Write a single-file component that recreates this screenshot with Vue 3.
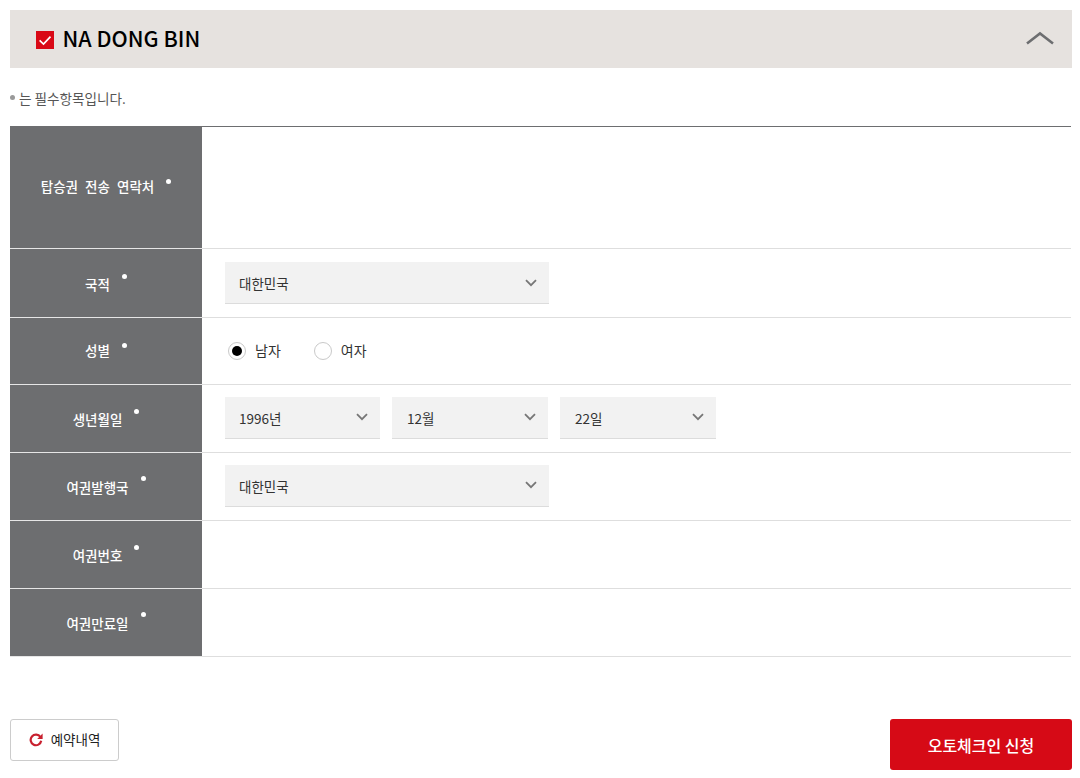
<script setup>
const rows = [
  { key: 'contact', label: '탑승권 전송 연락처', type: 'empty' },
  { key: 'nation', label: '국적', type: 'select', values: [{ text: '대한민국', wide: true }] },
  { key: 'gender', label: '성별', type: 'radio' },
  { key: 'birth', label: '생년월일', type: 'select', values: [{ text: '1996년' }, { text: '12월' }, { text: '22일' }] },
  { key: 'issue', label: '여권발행국', type: 'select', values: [{ text: '대한민국', wide: true }] },
  { key: 'passport', label: '여권번호', type: 'empty' },
  { key: 'expiry', label: '여권만료일', type: 'empty' }
]
</script>

<template>
  <div class="page">
    <header class="head">
      <div class="name">
        <span class="check">
          <svg width="18" height="18" viewBox="0 0 18 18"><path d="M3.6 9.4l3.9 3.7 7-7.5" fill="none" stroke="#fff" stroke-width="1.7"/></svg>
        </span>
        <span class="name-text">NA DONG BIN</span>
      </div>
      <svg class="collapse" width="30" height="16" viewBox="0 0 30 16"><path d="M2 12.5L15 2.5l13 10" fill="none" stroke="#6d6e70" stroke-width="2.6"/></svg>
    </header>

    <p class="note"><i class="note-dot"></i>는 필수항목입니다.</p>

    <div class="table">
      <div v-for="row in rows" :key="row.key" class="row" :class="row.key">
        <div class="label">
          <span class="label-text">{{ row.label }}<i class="req"></i></span>
        </div>
        <div class="field">
          <template v-if="row.type === 'select'">
            <div v-for="v in row.values" :key="v.text" class="select" :class="{ wide: v.wide }">
              <span class="select-text">{{ v.text }}</span>
              <svg width="12" height="8" viewBox="0 0 12 8"><path d="M1 1.2l5 5 5-5" fill="none" stroke="#777" stroke-width="1.8"/></svg>
            </div>
          </template>
          <div v-else-if="row.type === 'radio'" class="radios">
            <label class="radio"><span class="circle on"></span><span class="radio-text">남자</span></label>
            <label class="radio"><span class="circle"></span><span class="radio-text">여자</span></label>
          </div>
        </div>
      </div>
    </div>

    <footer class="actions">
      <button class="history">
        <svg width="14" height="14" viewBox="0 0 14 14"><path d="M11.4 4A5.3 5.3 0 1 0 12.2 7.8" fill="none" stroke="#c8202f" stroke-width="2.2"/><path d="M13.6 0.6v5.4h-5.4z" fill="#c8202f"/></svg>
        <span class="history-text">예약내역</span>
      </button>
      <button class="submit">오토체크인 신청</button>
    </footer>
  </div>
</template>

<style scoped>
.page {
  width: 1062px;
  padding: 10px 0 8px 10px;
  font-family: "Noto Sans CJK KR", "Noto Sans", sans-serif;
  color: #333;
}
.head {
  height: 58px;
  background: #e6e2df;
  display: flex;
  align-items: center;
  justify-content: space-between;
  padding: 0 17px 0 26px;
  box-sizing: border-box;
}
.name { display: flex; align-items: center; gap: 8.5px; }
.check {
  width: 18px;
  height: 18px;
  background: #d90916;
  display: block;
  margin-top: 2px;
}
.check svg { display: block; }
.name-text {
  font-size: 21.5px;
  font-weight: 500;
  line-height: 30px;
  color: #000;
  margin-bottom: 3px;
}
.collapse { display: block; }
.note {
  margin: 0;
  font-size: 13.6px;
  line-height: 20px;
  color: #555;
  display: flex;
  align-items: center;
  height: 58px;
  padding: 1px 0 0;
  box-sizing: border-box;
}
.note-dot {
  width: 5px;
  height: 5px;
  border-radius: 50%;
  background: #999;
  margin-right: 4px;
}
.table {
  width: 1061px;
  border-top: 1px solid #6d6e70;
}
.row {
  display: grid;
  grid-template-columns: 192px 1fr;
  height: 68px;
}
.row.contact { height: 122px; }
.row.nation { height: 69px; }
.row.gender { height: 67px; }
.label {
  background: #6d6e70;
  border-bottom: 1px solid #e6e6e6;
  display: flex;
  align-items: center;
  justify-content: center;
  box-sizing: border-box;
}
.label-text {
  position: relative;
  font-size: 13.5px;
  font-weight: 500;
  color: #fff;
  line-height: 20px;
  top: 0;
  padding-right: 17px;
  word-spacing: 4px;
}
.contact .label-text { top: -2px; }
.nation .label-text { top: 1px; }
.gender .label-text { top: -1px; }
.req {
  position: absolute;
  right: 0;
  top: 0;
  width: 5px;
  height: 5px;
  border-radius: 50%;
  background: #fff;
}
.contact .req, .gender .req { top: 3px; }
.issue .req, .expiry .req { top: -1px; }
.field {
  border-bottom: 1px solid #dedede;
  padding-left: 23px;
  display: flex;
  align-items: center;
  gap: 12px;
  box-sizing: border-box;
}
.birth .field, .issue .field { padding-bottom: 2px; }
.select {
  width: 156px;
  height: 42px;
  background: #f2f2f2;
  border-bottom: 1px solid #dcdcdc;
  box-sizing: border-box;
  display: flex;
  align-items: center;
  justify-content: space-between;
  padding: 0 12px 0 15px;
  font-size: 13.5px;
  color: #333;
}
.select:first-child { width: 155px; padding-left: 14px; }
.select.wide { width: 324px; }
.birth .select-text, .issue .select-text { margin-top: 2px; }
.radios { display: flex; gap: 33px; padding-left: 3px; }
.radio {
  display: flex;
  align-items: center;
  gap: 9px;
  font-size: 14px;
  color: #333;
  line-height: 20px;
}
.radio-text { margin-bottom: 2px; }
.circle {
  width: 18px;
  height: 18px;
  border-radius: 50%;
  border: 1px solid #c9c9c9;
  box-sizing: border-box;
  background: #fff;
  display: flex;
  align-items: center;
  justify-content: center;
}
.circle.on::after {
  content: "";
  width: 10px;
  height: 10px;
  border-radius: 50%;
  background: #000;
}
.actions {
  display: flex;
  justify-content: space-between;
  align-items: flex-start;
  margin-top: 62px;
}
.history {
  width: 109px;
  height: 42px;
  background: #fff;
  border: 1px solid #ccc;
  border-radius: 3px;
  display: flex;
  align-items: center;
  justify-content: center;
  gap: 8px;
  padding: 0;
  font: inherit;
  font-size: 13.5px;
  color: #222;
}
.history-text { margin-bottom: 3px; }
.submit {
  width: 182px;
  height: 51px;
  background: #d60a16;
  border: 0;
  border-radius: 3px;
  color: #fff;
  font: inherit;
  font-size: 16px;
  font-weight: 500;
}
</style>

<style>
html, body { margin: 0; background: #fff; }
</style>
